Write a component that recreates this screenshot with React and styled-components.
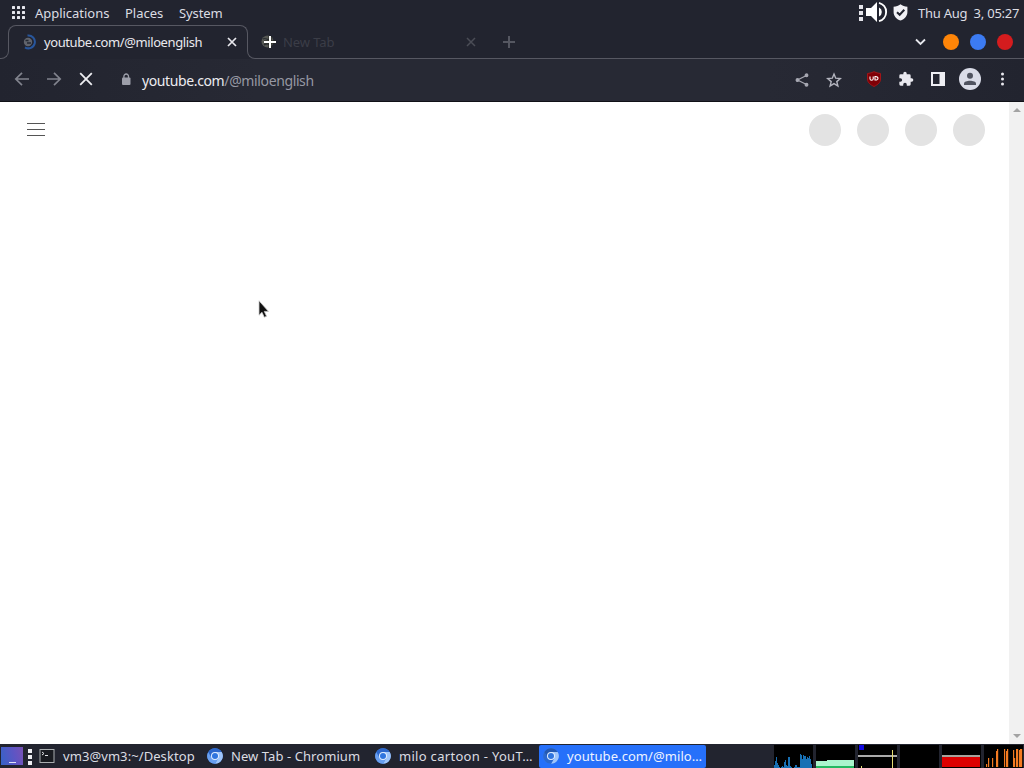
import React from 'react';
import styled, { createGlobalStyle } from 'styled-components';

const GlobalStyle = createGlobalStyle`
  * {
    box-sizing: border-box;
  }
  body {
    margin: 0;
    background: #fff;
    font-family: 'Noto Sans', sans-serif;
    font-size: 13px;
    color: #dcdde3;
    overflow: hidden;
  }
  svg {
    display: block;
    flex: none;
  }
`;

const Desktop = styled.div`
  display: flex;
  flex-direction: column;
  width: 1024px;
  height: 768px;
`;

const Label = styled.span`
  flex: none;
  width: ${({ $width }) => $width}px;
  white-space: pre;
  line-height: 20px;
  letter-spacing: ${({ $spacing }) => $spacing || 0}px;
  color: ${({ $color }) => $color || 'inherit'};
`;

const Spacer = styled.div`
  flex: 1;
`;

const Gap = styled.div`
  flex: none;
  width: ${({ $width }) => $width}px;
`;

const TopPanel = styled.div`
  display: flex;
  align-items: center;
  height: 25px;
  padding: 1px 4px 0 12px;
  background: #22242f;
`;

const Apps = styled.div`
  margin-top: -2px;
`;

const Menus = styled.div`
  display: flex;
  gap: 16px;
  margin-left: 10px;
`;

const Tray = styled.div`
  display: flex;
  align-items: center;
  margin-top: -2px;
`;

const TabStrip = styled.div`
  display: flex;
  height: 34px;
  background: #22242f;
`;

const Corner = styled.div`
  align-self: flex-end;
  flex: none;
  width: 9px;
  height: 10px;
  border-bottom: 1px solid #575862;
  ${({ $side }) =>
    $side === 'left'
      ? 'border-right: 1px solid #575862; border-bottom-right-radius: 8px; margin-right: -1px;'
      : 'border-left: 1px solid #575862; border-bottom-left-radius: 8px; margin-left: -1px;'}
`;

const ActiveTab = styled.div`
  display: flex;
  align-items: center;
  flex: none;
  width: 240px;
  height: 24px;
  padding: 9px 10px 0 13px;
  border: 1px solid #575862;
  border-bottom: none;
  border-radius: 8px 8px 0 0;
  color: #e9e9ee;
`;

const InactiveTabs = styled.div`
  display: flex;
  align-items: center;
  flex: 1;
  padding: 0 11px 0 5px;
  border-bottom: 1px solid #575862;
`;

const WindowButton = styled.div`
  flex: none;
  width: 16px;
  height: 16px;
  margin-left: ${({ $gap }) => $gap || 11}px;
  border-radius: 50%;
  background: ${({ $color }) => $color};
`;

const Toolbar = styled.div`
  display: flex;
  align-items: center;
  height: 43px;
  padding: 0 14px 2px;
  background: linear-gradient(90deg, #22242f, #272934 25%, #272934 75%, #22242f);
  border-bottom: 1px solid #101117;
`;

const NavButtons = styled.div`
  display: flex;
  gap: 16px;
`;

const Address = styled.div`
  display: flex;
  align-items: center;
  flex: 1;
  margin-left: 27px;
`;

const Url = styled.span`
  margin-left: 11px;
  padding-top: 3px;
  font-size: 14px;
  letter-spacing: -0.38px;
  color: #9698a3;
  b {
    font-weight: 400;
    color: #ececf1;
  }
`;

const Actions = styled.div`
  display: flex;
  align-items: center;
  gap: 16px;
`;

const PageActions = styled.div`
  display: flex;
  gap: 16px;
  margin: 1px 8px 0 0;
`;

const Avatar = styled.div`
  display: flex;
  align-items: center;
  justify-content: center;
  width: 22px;
  height: 22px;
  margin: 0 -3px;
  border-radius: 50%;
  background: #dadce8;
`;

const Content = styled.div`
  position: relative;
  display: flex;
  flex: 1;
  min-height: 0;
  background: #fff;
`;

const Page = styled.div`
  display: flex;
  align-items: flex-start;
  justify-content: space-between;
  flex: 1;
  padding: 12px 24px 0 27px;
`;

const Burger = styled.div`
  display: flex;
  flex-direction: column;
  gap: 5px;
  padding-top: 9px;
`;

const BurgerLine = styled.div`
  width: 18px;
  height: 1px;
  background: #555;
`;

const Placeholders = styled.div`
  display: flex;
  gap: 16px;
`;

const Circle = styled.div`
  width: 32px;
  height: 32px;
  border-radius: 50%;
  background: #e3e3e3;
`;

const Scrollbar = styled.div`
  display: flex;
  flex-direction: column;
  justify-content: space-between;
  align-items: center;
  width: 15px;
  padding: 6px 0;
  background: #f1f1f1;
`;

const Pointer = styled.div`
  position: absolute;
  left: 258px;
  top: 198px;
`;

const Taskbar = styled.div`
  display: flex;
  align-items: center;
  flex: none;
  height: 24px;
  background: #22242f;
`;

const DesktopButton = styled.div`
  display: flex;
  align-items: flex-end;
  justify-content: center;
  width: 22px;
  height: 18px;
  margin-left: 1px;
  padding-bottom: 2px;
  background: linear-gradient(75deg, #3563c8, #5e55c4 60%, #7951b5);
`;

const DesktopDots = styled.div`
  width: 7px;
  height: 1px;
  background: #dfe2f7;
`;

const Task = styled.div`
  display: flex;
  align-items: center;
  gap: 8px;
  width: ${({ $width }) => $width}px;
  height: 23px;
  padding-left: 4px;
  border-radius: 2px;
  color: ${({ $active }) => ($active ? '#eef3ff' : '#dcdde3')};
  background: ${({ $active }) => ($active ? '#2670fa' : 'transparent')};
`;

const Monitors = styled.div`
  display: flex;
  gap: 3px;
  height: 24px;
  padding: 1px 1px 0 0;
`;

const Monitor = styled.div`
  width: 39px;
  height: 23px;
  background: #000;
`;

const Arrow = ({ flip }) => (
  <svg width="16" height="16" viewBox="0 0 16 16" fill="none" stroke="#81838d" strokeWidth="1.7">
    <path d={flip ? 'M1 8h13M8 1.8 14.2 8 8 14.2' : 'M15 8H2M8 1.8 1.8 8 8 14.2'} />
  </svg>
);

const Cross = ({ size, color, width }) => (
  <svg width={size} height={size} viewBox="0 0 10 10" stroke={color} strokeWidth={width}>
    <path d="M1 1 9 9M9 1 1 9" />
  </svg>
);

const Dots = ({ size, gap, color, top = 0 }) => (
  <svg width={size} height="17" fill={color}>
    {[0, 1, 2].map((i) => (
      <rect key={i} x="0" y={top + i * gap} width={size} height={size} />
    ))}
  </svg>
);

const Chromium = ({ active }) => (
  <svg width="16" height="16" viewBox="0 0 16 16">
    <circle cx="8" cy="8" r="7.8" fill={active ? '#3e82e5' : '#4688e9'} />
    <path d="M8 4h6.7A7.8 7.8 0 0 1 8 15.8L11.5 10z" fill="#9fc5fa" />
    <path d="M1.3 4A7.8 7.8 0 0 0 8 15.8L11 10.5 4.5 10z" fill={active ? '#2b68d0' : '#699ff0'} />
    <path d="M1.3 4A7.8 7.8 0 0 1 14.7 4H8L4.5 9.5z" fill={active ? '#2459b2' : '#2c67cc'} />
    <circle cx="8" cy="8" r="4" fill="#e1edff" />
    <circle cx="8" cy="8" r="3" fill="#2f75df" />
  </svg>
);

const AppsIcon = () => (
  <svg width="13" height="13" fill="#e6e6ed">
    {[0, 5, 10].map((y) =>
      [0, 5, 10].map((x) => <rect key={`${x}-${y}`} x={x} y={y} width="3" height="3" rx=".5" />)
    )}
  </svg>
);

const SpeakerIcon = () => (
  <svg width="22" height="22" viewBox="0 0 22 22">
    <path d="M0 7h5l6-6v20l-6-6H0z" fill="#fff" />
    <path d="M13 6.5a5 5 0 0 1 0 9z" fill="#fff" />
    <path d="M13 1.8a9.5 9.5 0 0 1 0 18.4" fill="none" stroke="#fff" strokeWidth="1.9" />
  </svg>
);

const ShieldIcon = () => (
  <svg width="15" height="17" viewBox="0 0 15 17">
    <path d="M7.5.3c2 1.6 4.2 2.3 6.9 2.5v5.1c0 4-2.7 6.9-6.9 8.7C3.3 14.8.6 11.9.6 7.9V2.8C3.3 2.6 5.5 1.9 7.5.3z" fill="#f1f1f5" />
    <path d="m4 8.2 2.7 2.6 4.6-5" fill="none" stroke="#22242f" strokeWidth="2" />
  </svg>
);

const LoadingIcon = () => (
  <svg width="14" height="16" viewBox="0 0 14 16" fill="none">
    <circle cx="6" cy="8" r="4.2" fill="#61646c" />
    <path d="M3.5 6.5h3M5 9h4" stroke="#252933" strokeWidth="1.3" />
    <path d="M5.5 1.6A6.4 6.4 0 1 1 3 13.3" stroke="#28569c" strokeWidth="2" />
  </svg>
);

const NewTabIcon = () => (
  <svg width="16" height="16" viewBox="0 0 16 16">
    <circle cx="6.5" cy="7.5" r="6" fill="#555753" />
    <path d="M2 5c3-2 4 2 7 0M3 11c2-2 4 0 6-1" stroke="#292b31" strokeWidth="1.2" fill="none" />
    <path d="M9 2v12M3 8h12" stroke="#252720" strokeWidth="3" />
    <path d="M9 2v12M3 8h12" stroke="#fff" strokeWidth="2" />
  </svg>
);

// bar heights of the cpu graph, one per pixel column
const cpu = [3, 7, 11, 5, 3, 1, 0, 1, 2, 1, 6, 8, 3, 2, 11, 11, 2, 1, 0, 0, 1, 3, 3, 1, 1, 1, 14, 13, 9, 13, 12, 12, 9, 11, 10, 12, 9, 4];
// [x, height]
const disk = [[2, 3], [4, 9], [8, 9], [12, 16], [13, 18], [20, 18], [22, 16], [23, 18], [29, 17], [30, 9], [32, 18], [33, 18], [35, 17], [36, 18], [37, 18]];

const App = () => (
  <Desktop>
    <GlobalStyle />
    <TopPanel>
      <Apps>
        <AppsIcon />
      </Apps>
      <Menus>
        <Label $width={74} $spacing={-0.03}>Applications</Label>
        <Label $width={38}>Places</Label>
        <Label $width={44} $spacing={-0.1}>System</Label>
      </Menus>
      <Spacer />
      <Tray>
        <Dots size={4} gap={6} top={1} color="#e5e5eb" />
        <Gap $width={3} />
        <SpeakerIcon />
        <Gap $width={5} />
        <ShieldIcon />
      </Tray>
      <Gap $width={10} />
      <Label $width={102} $spacing={-0.24}>Thu Aug  3, 05:27</Label>
    </TopPanel>

    <TabStrip>
      <Corner $side="left" />
      <ActiveTab>
        <LoadingIcon />
        <Gap $width={8} />
        <Label $width={183} $spacing={-0.41}>youtube.com/@miloenglish</Label>
        <Cross size={10} color="#e9e9ee" width={1.7} />
      </ActiveTab>
      <Corner $side="right" />
      <InactiveTabs>
        <NewTabIcon />
        <Gap $width={6} />
        <Label $width={183} $spacing={-0.1} $color="#3b3d47">
          New Tab
        </Label>
        <Cross size={10} color="#4b4d56" width={1.5} />
        <Gap $width={27} />
        <svg width="12" height="12" stroke="#555761" strokeWidth="2">
          <path d="M6 0v12M0 6h12" />
        </svg>
        <Spacer />
        <svg width="11" height="8" fill="none" stroke="#e6e7ed" strokeWidth="1.8">
          <path d="m1 1.5 4.5 4.5L10 1.500" />
        </svg>
        <WindowButton $color="#ff8508" $gap={17} />
        <WindowButton $color="#3c7bf2" />
        <WindowButton $color="#d41c1e" />
      </InactiveTabs>
    </TabStrip>

    <Toolbar>
      <NavButtons>
        <Arrow />
        <Arrow flip />
        <svg width="16" height="16" stroke="#eeeef2" strokeWidth="1.8">
          <path d="m2.2 2.2 11.6 11.6M13.8 2.2 2.2 13.8" />
        </svg>
      </NavButtons>
      <Address>
        <svg width="10" height="13" viewBox="0 0 10 13">
          <rect x="1" y="4.5" width="8.5" height="7.5" rx="1" fill="#9c9ea9" />
          <path d="M2.9 5V3.3a2.3 2.3 0 0 1 4.6 0V5" fill="none" stroke="#9c9ea9" strokeWidth="1.3" />
        </svg>
        <Url>
          <b>youtube.com</b>/@miloenglish
        </Url>
      </Address>
      <Actions>
        <PageActions>
          <svg width="16" height="16" fill="#a7a8b2" stroke="#a7a8b2" strokeWidth="1.3">
            <path d="M12.5 3.5 3.5 8l9 4.5" fill="none" />
            <circle cx="12.5" cy="3.3" r="1.3" />
            <circle cx="3.5" cy="8" r="1.3" />
            <circle cx="12.5" cy="12.7" r="1.3" />
          </svg>
          <svg width="16" height="16" fill="none" stroke="#b4b5bf" strokeWidth="1.4">
            <path d="m8 2 1.7 4.2 4.6.4-3.5 3 1.1 4.4L8 11.6 4.1 14l1.1-4.4-3.5-3 4.6-.4z" />
          </svg>
        </PageActions>
        <svg width="16" height="16">
          <path d="M8 .7c2 1 4 1.6 6.5 1.8V8c0 3.5-2.5 5.5-6.5 7.500C4 13.5 1.5 11.5 1.5 8V2.5C4 2.3 6 1.7 8 .7z" fill="#800006" stroke="#a21518" />
          <path d="M4 5.5v2.3c0 2 3.2 2 3.2 0V5.5M9 5.6V9c4 .5 4-3.9 0-3.4z" fill="none" stroke="#fff" strokeWidth="1.1" />
        </svg>
        <svg width="16" height="16" viewBox="0 0 24 24" fill="#e9e9ef">
          <path d="M20.5 11H19V7a2 2 0 0 0-2-2h-4V3.5a2.5 2.5 0 0 0-5 0V5H4a2 2 0 0 0-2 2v3.8h1.5a2.7 2.7 0 0 1 0 5.4H2V20a2 2 0 0 0 2 2h3.8v-1.5a2.7 2.7 0 0 1 5.4 0V22H17a2 2 0 0 0 2-2v-4h1.5a2.5 2.5 0 0 0 0-5z" />
        </svg>
        <svg width="16" height="16">
          <path d="M1 1h14v14H1zM3 3v10h6.5V3z" fill="#eeeef3" fillRule="evenodd" />
        </svg>
        <Avatar>
          <svg width="14" height="14" fill="#505360">
            <circle cx="7" cy="3.8" r="3" />
            <path d="M1 13v-1.5C1 7.8 13 7.8 13 11.5V13z" />
          </svg>
        </Avatar>
        <svg width="16" height="16" fill="#e9e9ef">
          <circle cx="8.5" cy="3" r="1.5" />
          <circle cx="8.5" cy="8" r="1.5" />
          <circle cx="8.5" cy="13" r="1.5" />
        </svg>
      </Actions>
    </Toolbar>

    <Content>
      <Page>
        <Burger>
          <BurgerLine />
          <BurgerLine />
          <BurgerLine />
        </Burger>
        <Placeholders>
          <Circle />
          <Circle />
          <Circle />
          <Circle />
        </Placeholders>
      </Page>
      <Scrollbar>
        <svg width="8" height="4" fill="#a3a3a3">
          <path d="M0 4h8L4 0z" />
        </svg>
        <svg width="8" height="4" fill="#a3a3a3">
          <path d="M0 0h8L4 4z" />
        </svg>
      </Scrollbar>
      <Pointer>
        <svg width="13" height="19" viewBox="0 0 13 19">
          <path d="M1 .8v14.4l3-2.9 2.3 5 2.3-1-2.3-4.9h4.2z" fill="#111" stroke="#ccc" strokeWidth=".8" />
        </svg>
      </Pointer>
    </Content>

    <Taskbar>
      <DesktopButton>
        <DesktopDots />
      </DesktopButton>
      <Gap $width={5} />
      <Dots size={4} gap={6} top={1} color="#eeeef2" />
      <Gap $width={3} />
      <Task $width={168}>
        <svg width="16" height="16">
          <rect x="1" y="1.5" width="14" height="13" fill="#191b20" stroke="#aaaeb0" />
          <path d="m3 4 2 1.5L3 7M6 7.5h3" fill="none" stroke="#e1e3e5" />
        </svg>
        <Label $width={134} $spacing={0.08}>vm3@vm3:~/Desktop</Label>
      </Task>
      <Task $width={168}>
        <Chromium />
        <Label $width={134} $spacing={0.07}>New Tab - Chromium</Label>
      </Task>
      <Task $width={168}>
        <Chromium />
        <Label $width={134} $spacing={0.3}>milo cartoon - YouT…</Label>
      </Task>
      <Task $width={167} $active>
        <Chromium active />
        <Label $width={134} $spacing={0.07}>youtube.com/@milo…</Label>
      </Task>
      <Spacer />
      <Monitors>
        <Monitor>
          <svg width="39" height="23" fill="#1870b4">
            {cpu.map((h, i) => (
              <rect key={i} x={i} y={23 - h} width="1" height={h} />
            ))}
          </svg>
        </Monitor>
        <Monitor>
          <svg width="39" height="23">
            <path d="M0 16h11v-1h27v6H0z" fill="#aaf5cd" />
            <path d="M0 21h38v2H0z" fill="#24b861" />
          </svg>
        </Monitor>
        <Monitor>
          <svg width="39" height="23">
            <path d="M1 0h5v5H1z" fill="#1008e0" />
            <path d="M0 11h39" stroke="#aaa" strokeWidth="2" />
            <path d="M34.5 5v18M3.5 21v2" stroke="#e6dc72" />
          </svg>
        </Monitor>
        <Monitor />
        <Monitor>
          <svg width="39" height="23">
            <path d="M0 10h38v2H0z" fill="#a7a39c" />
            <path d="M0 12h38v10H0z" fill="#dc0000" />
          </svg>
        </Monitor>
        <Monitor>
          <svg width="39" height="23" fill="#f47b22">
            {disk.map(([x, h]) => (
              <rect key={x} x={x} y={22 - h} width="1.2" height={h} />
            ))}
          </svg>
        </Monitor>
      </Monitors>
    </Taskbar>
  </Desktop>
);

export default App;
